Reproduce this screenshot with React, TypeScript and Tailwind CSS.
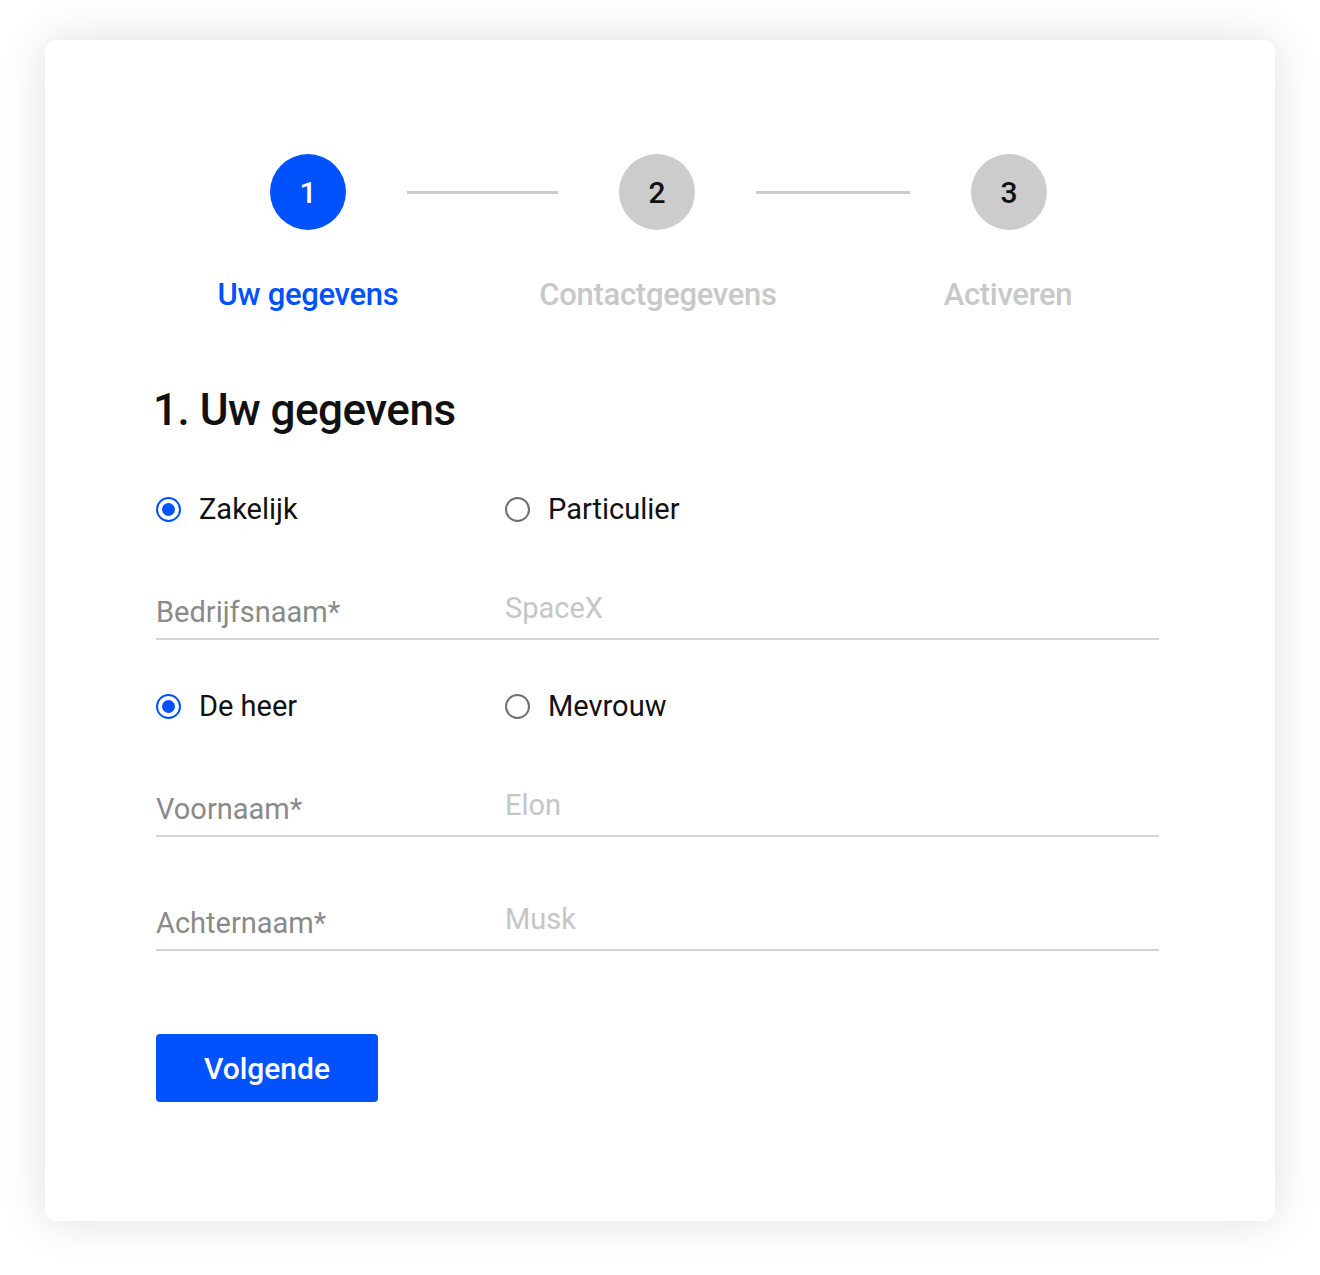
import React from "react"

const steps = [
  { n: 1, label: "Uw gegevens", active: true },
  { n: 2, label: "Contactgegevens", active: false },
  { n: 3, label: "Activeren", active: false },
]

function Radio({ checked, label }: { checked: boolean; label: string }) {
  return (
    <label className="flex items-center h-[32px] cursor-pointer">
      {checked ? (
        <span className="w-[25px] h-[25px] rounded-full border-[2.5px] border-[#0052ff] flex items-center justify-center">
          <span className="w-[13px] h-[13px] rounded-full bg-[#0052ff]" />
        </span>
      ) : (
        <span className="w-[25px] h-[25px] rounded-full border-2 border-[#6f6f6f]" />
      )}
      <span className="ml-[18px] text-[29px] leading-none text-[#111]">{label}</span>
    </label>
  )
}

function Field({ label, value, className }: { label: string; value: string; className?: string }) {
  return (
    <div className={`grid grid-cols-[349px_1fr] items-end border-b-2 border-[#d4d4d4] pb-[9px] ${className ?? ""}`}>
      <span className="text-[29px] leading-[34px] text-[#8a8a8a]">{label}</span>
      <span className="text-[29px] leading-[26px] text-[#c6c6c6] mb-[8px]">{value}</span>
    </div>
  )
}

export default function App() {
  return (
    <div className="min-h-[1275px] bg-white pt-[40px] px-[45px] pb-[54px] font-['Roboto',sans-serif]">
      <div className="w-[1230px] rounded-[12px] bg-white shadow-[0_0_45px_rgba(0,0,0,0.13)] pt-[114px] pl-[111px] pr-[116px] pb-[119px]">
        {/* Stepper */}
        <div className="flex items-center ml-[114px]">
          {steps.map((s, i) => (
            <React.Fragment key={s.n}>
              <div
                className={`w-[76px] h-[76px] shrink-0 rounded-full flex items-center justify-center text-[30px] font-medium ${
                  s.active ? "bg-[#0052ff] text-white" : "bg-[#cccccc] text-[#111]"
                }`}
              >
                {s.n}
              </div>
              {i < steps.length - 1 && (
                <div className={`h-[3px] shrink-0 bg-[#cccccc] mx-[61px] ${i === 0 ? "w-[151px]" : "w-[154px]"}`} />
              )}
            </React.Fragment>
          ))}
        </div>
        <div className="flex -ml-[23px] mt-[47px]">
          {steps.map((s) => (
            <div
              key={s.n}
              className={`w-[350px] shrink-0 text-center text-[31px] leading-[36px] font-medium tracking-[-0.3px] ${
                s.active ? "text-[#0052ff]" : "text-[#c8c8c8]"
              }`}
            >
              {s.label}
            </div>
          ))}
        </div>

        <h1 className="mt-[73px] -ml-[3px] text-[44px] leading-[48px] font-medium text-[#111] tracking-[-0.5px]">1. Uw gegevens</h1>

        <div className="grid grid-cols-[349px_1fr] mt-[59px]">
          <Radio checked label="Zakelijk" />
          <Radio checked={false} label="Particulier" />
        </div>

        <Field label="Bedrijfsnaam*" value="SpaceX" className="mt-[70px]" />

        <div className="grid grid-cols-[349px_1fr] mt-[50px]">
          <Radio checked label="De heer" />
          <Radio checked={false} label="Mevrouw" />
        </div>

        <Field label="Voornaam*" value="Elon" className="mt-[70px]" />
        <Field label="Achternaam*" value="Musk" className="mt-[69px]" />

        <button className="mt-[83px] w-[222px] h-[68px] rounded-[4px] bg-[#0052ff] text-white text-[30px] font-medium flex items-center justify-center">
          Volgende
        </button>
      </div>
    </div>
  )
}
